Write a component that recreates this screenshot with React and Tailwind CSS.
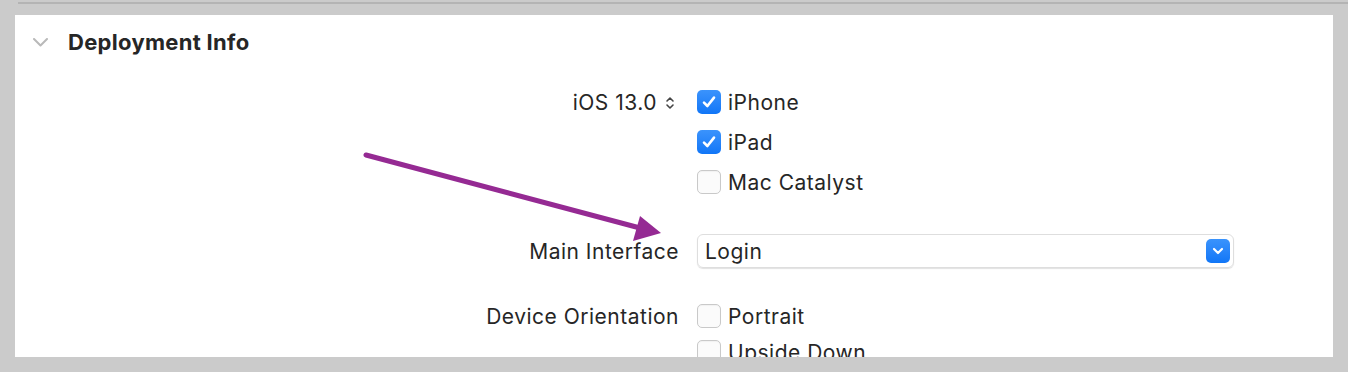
import React from 'react'

const FONT = { fontFamily: 'Inter, "Liberation Sans", sans-serif' }

function CheckBox({ checked }) {
  if (checked) {
    return (
      <span className="w-[24px] h-[24px] rounded-[5px] bg-gradient-to-b from-[#3a93fc] to-[#0f76f7] flex items-center justify-center shrink-0">
        <svg width="16" height="16" viewBox="0 0 16 16">
          <path d="M3 8.6 L6.4 12 L13 3.6" fill="none" stroke="#fff" strokeWidth="2.6" strokeLinecap="round" strokeLinejoin="round" />
        </svg>
      </span>
    )
  }
  return <span className="w-[24px] h-[24px] rounded-[5px] border border-[#c9c9c9] bg-[#fbfbfb] shadow-[inset_0_1px_1px_rgba(0,0,0,0.04)] shrink-0" />
}

function CheckRow({ label, checked, tall = true, children }) {
  return (
    <div className={`grid grid-cols-[664px_1fr] gap-x-[18px] items-center ${tall ? 'h-[40px]' : 'h-[36px]'}`}>
      <div className="text-right text-[21px] tracking-[0.5px] text-[#262626] pt-[2px]">{children}</div>
      <div className="flex items-center gap-[7px]">
        <CheckBox checked={checked} />
        <span className="text-[21px] tracking-[0.5px] text-[#262626] pt-[2px]">{label}</span>
      </div>
    </div>
  )
}

export default function App() {
  return (
    <div className="relative w-[1348px] h-[372px] bg-[#cbcbcb] overflow-hidden" style={FONT}>
      {/* top divider */}
      <div className="absolute left-[18px] right-0 top-[2px] h-[2px] bg-[#b4b4b4]" />

      <div className="pt-[15px] pl-[15px] pr-[15px]">
        <div className="bg-white h-[342px] overflow-hidden">
          {/* header */}
          <div className="flex items-center h-[54px] pl-[18px]">
            <svg width="15" height="9" viewBox="0 0 15 9">
              <path d="M1 1 L7.5 7.5 L14 1" fill="none" stroke="#b9b9b9" strokeWidth="2" strokeLinecap="round" strokeLinejoin="round" />
            </svg>
            <span className="ml-[20px] font-bold text-[22px] tracking-[0.3px] text-[#262626]">Deployment Info</span>
          </div>

          <div className="h-[13px]" />

          <CheckRow label="iPhone" checked>
            <span className="inline-flex items-center gap-[8px] pr-[4px]">
              iOS 13.0
              <svg width="10" height="14" viewBox="0 0 10 14">
                <path d="M2 5 L5 2 L8 5 M2 9 L5 12 L8 9" fill="none" stroke="#444" strokeWidth="1.6" strokeLinecap="round" strokeLinejoin="round" />
              </svg>
            </span>
          </CheckRow>
          <CheckRow label="iPad" checked />
          <CheckRow label="Mac Catalyst" />

          {/* main interface */}
          <div className="grid grid-cols-[664px_1fr] gap-x-[18px] items-center mt-[32px]">
            <div className="text-right text-[21px] tracking-[0.5px] text-[#262626] pt-[2px]">Main Interface</div>
            <div className="w-[537px] h-[34px] rounded-[6px] border border-[#dedede] shadow-[0_1px_1px_rgba(0,0,0,0.12)] flex items-center justify-between pl-[7px] pr-[3px]">
              <span className="text-[21px] tracking-[0.5px] text-[#262626] pt-[2px]">Login</span>
              <span className="w-[24px] h-[24px] rounded-[5px] bg-gradient-to-b from-[#3a93fc] to-[#0f76f7] flex items-center justify-center">
                <svg width="12" height="8" viewBox="0 0 12 8">
                  <path d="M2 2 L6 6 L10 2" fill="none" stroke="#fff" strokeWidth="2.2" strokeLinecap="round" strokeLinejoin="round" />
                </svg>
              </span>
            </div>
          </div>

          <div className="h-[30px]" />
          <CheckRow label="Portrait" tall={false}>Device Orientation</CheckRow>
          <CheckRow label="Upside Down" tall={false} />
        </div>
      </div>

      {/* annotation arrow */}
      <svg className="absolute left-0 top-0 pointer-events-none" width="1348" height="372">
        <line x1="366" y1="155" x2="640" y2="228" stroke="#952a93" strokeWidth="5" strokeLinecap="round" />
        <polygon points="661,233 633,241 640,216" fill="#952a93" />
      </svg>
    </div>
  )
}
